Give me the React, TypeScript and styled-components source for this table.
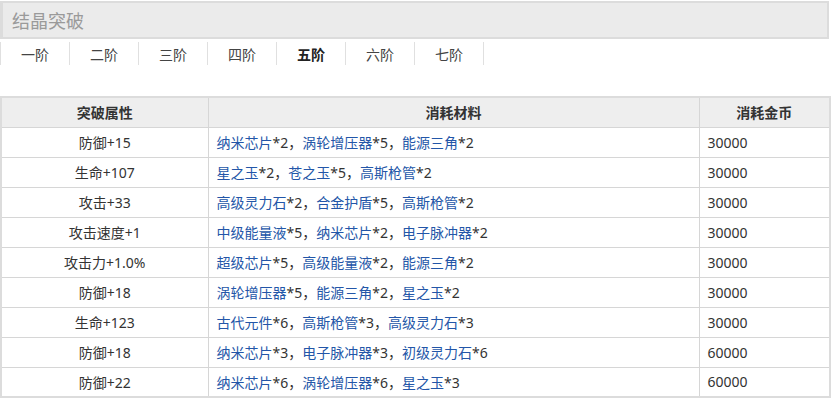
import React from "react";
import styled, { createGlobalStyle } from "styled-components";

const Global = createGlobalStyle`
  body {
    margin: 0;
    background: #fff;
    font-family: "Noto Sans", "Noto Sans CJK SC", sans-serif;
    color: #333;
  }
  * { box-sizing: border-box; }
`;

const Page = styled.div`
  width: 829px;
  padding-top: 1px;
`;

const TitleBar = styled.div`
  height: 38px;
  background: #ebebeb;
  border: 2px solid #dcdcdc;
  border-left-width: 3px;
  display: flex;
  align-items: center;
  padding-left: 9px;
  font-size: 18px;
  color: #9a9a9a;
`;

const Tabs = styled.div`
  display: flex;
  margin-top: 3px;
  height: 23px;
`;

const Tab = styled.div<{ $active?: boolean }>`
  width: 69px;
  display: flex;
  align-items: center;
  justify-content: center;
  border-left: 1px solid #e0e0e0;
  font-size: 14px;
  font-weight: ${(p) => (p.$active ? 700 : 400)};
  color: ${(p) => (p.$active ? "#222" : "#444")};
  &:last-child {
    width: 70px;
    border-right: 1px solid #e0e0e0;
  }
`;

const Table = styled.table`
  margin-top: 31px;
  width: 829px;
  border-collapse: collapse;
  border: 2px solid #dcdcdc;
  font-size: 14px;
  table-layout: fixed;
`;

const Th = styled.th<{ $w: number }>`
  width: ${(p) => p.$w}px;
  height: 30px;
  background: #eeeeee;
  border: 1px solid #d6d6d6;
  font-weight: 600;
  color: #333;
  text-align: center;
  padding: 0;
`;

const Td = styled.td`
  height: 30px;
  border: 1px solid #d6d6d6;
  padding: 0 0 0 8px;
  text-align: left;
  color: #333;
  white-space: nowrap;
`;

const AttrTd = styled(Td)`
  text-align: center;
  padding: 0;
`;

const Link = styled.span`
  color: #2356a8;
`;

const tabs = ["一阶", "二阶", "三阶", "四阶", "五阶", "六阶", "七阶"];

type Item = [string, number];
const rows: { attr: string; mats: Item[]; coin: string }[] = [
  { attr: "防御+15", mats: [["纳米芯片", 2], ["涡轮增压器", 5], ["能源三角", 2]], coin: "30000" },
  { attr: "生命+107", mats: [["星之玉", 2], ["苍之玉", 5], ["高斯枪管", 2]], coin: "30000" },
  { attr: "攻击+33", mats: [["高级灵力石", 2], ["合金护盾", 5], ["高斯枪管", 2]], coin: "30000" },
  { attr: "攻击速度+1", mats: [["中级能量液", 5], ["纳米芯片", 2], ["电子脉冲器", 2]], coin: "30000" },
  { attr: "攻击力+1.0%", mats: [["超级芯片", 5], ["高级能量液", 2], ["能源三角", 2]], coin: "30000" },
  { attr: "防御+18", mats: [["涡轮增压器", 5], ["能源三角", 2], ["星之玉", 2]], coin: "30000" },
  { attr: "生命+123", mats: [["古代元件", 6], ["高斯枪管", 3], ["高级灵力石", 3]], coin: "30000" },
  { attr: "防御+18", mats: [["纳米芯片", 3], ["电子脉冲器", 3], ["初级灵力石", 6]], coin: "60000" },
  { attr: "防御+22", mats: [["纳米芯片", 6], ["涡轮增压器", 6], ["星之玉", 3]], coin: "60000" },
];

export default function App() {
  return (
    <Page>
      <Global />
      <TitleBar>结晶突破</TitleBar>
      <Tabs>
        {tabs.map((t, i) => (
          <Tab key={t} $active={i === 4}>
            {t}
          </Tab>
        ))}
      </Tabs>
      <Table>
        <thead>
          <tr>
            <Th $w={207}>突破属性</Th>
            <Th $w={491}>消耗材料</Th>
            <Th $w={131}>消耗金币</Th>
          </tr>
        </thead>
        <tbody>
          {rows.map((r, i) => (
            <tr key={i}>
              <AttrTd>{r.attr}</AttrTd>
              <Td>
                {r.mats.map(([n, c], j) => (
                  <React.Fragment key={j}>
                    <Link>{n}</Link>*{c}
                    {j < r.mats.length - 1 ? "，" : ""}
                  </React.Fragment>
                ))}
              </Td>
              <Td>{r.coin}</Td>
            </tr>
          ))}
        </tbody>
      </Table>
    </Page>
  );
}
